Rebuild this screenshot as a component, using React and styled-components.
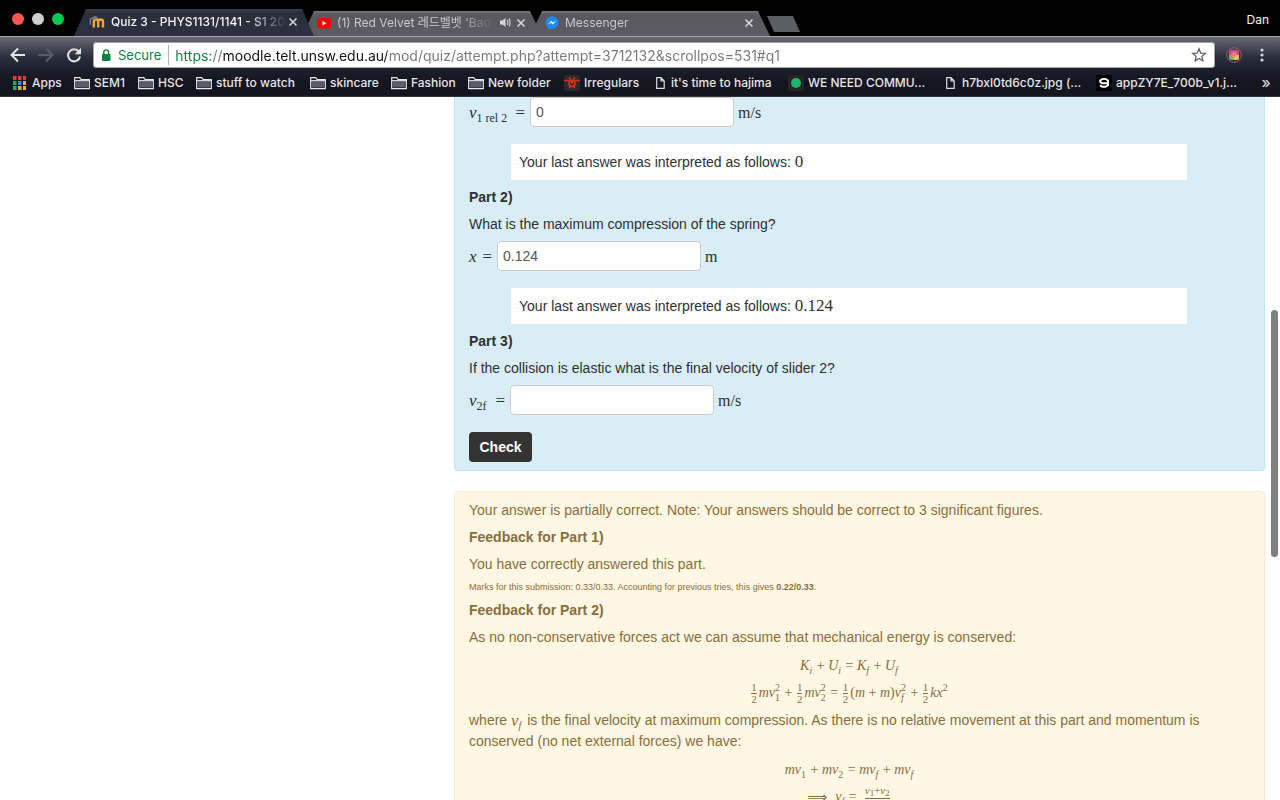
import React from "react";
import styled, { createGlobalStyle } from "styled-components";

const GlobalStyle = createGlobalStyle`
  * { box-sizing: border-box; }
  body { margin: 0; background: #fff; }
  p { margin: 0; }
`;

const ui = `Inter, Roboto, "Noto Sans CJK KR", sans-serif`;

const Window = styled.div`
  height: 100vh;
  overflow: hidden;
  display: flex;
  flex-direction: column;
  font: 14px/20px "Liberation Sans", Arial, sans-serif;
  color: #333;
`;

/* ---------- browser frame ---------- */
const TabStrip = styled.header`
  height: 36px;
  flex: none;
  display: flex;
  align-items: flex-end;
  background: #020203;
  font: 12px/18px ${ui};
`;
const Lights = styled.div`
  display: flex;
  gap: 8px;
  padding: 0 0 11px 12px;
  width: 74px;
  flex: none;
`;
const Light = styled.button`
  width: 12px;
  height: 12px;
  padding: 0;
  border: 0;
  border-radius: 50%;
  background: ${(p) => p.$color};
`;
const Tab = styled.div`
  position: relative;
  z-index: ${(p) => (p.$active ? 2 : 1)};
  width: 240px;
  height: ${(p) => (p.$active ? 27 : 25)}px;
  margin-right: -12px;
  padding: 0 15px 2px;
  display: flex;
  align-items: center;
  color: ${(p) => (p.$active ? "#f4f4f6" : "#c9c9cc")};
  font-weight: ${(p) => (p.$active ? 500 : 400)};
  background: ${(p) =>
    p.$active
      ? "linear-gradient(#3c404c, #2a2e3b 4px, #2d313f)"
      : "linear-gradient(#7b7b80, #58585e 3px, #5c5c62)"};
  clip-path: polygon(12px 0, calc(100% - 12px) 0, 100% 100%, 0 100%);
`;
const TabTitle = styled.span`
  flex: 1;
  min-width: 0;
  margin-left: 6px;
  overflow: hidden;
  white-space: nowrap;
  mask-image: linear-gradient(to right, #000 calc(100% - 40px), transparent);
`;
const IconButton = styled.button`
  display: flex;
  align-items: center;
  justify-content: center;
  flex: none;
  width: ${(p) => p.$w || 12}px;
  height: 20px;
  padding: 0;
  border: 0;
  background: none;
  color: #d5d6d9;
`;
const MoreButton = styled(IconButton)`
  margin-left: auto;
  font: 500 15px/18px ${ui};
`;
const NewTab = styled.button`
  width: 33px;
  height: 16px;
  margin: 0 0 4px 9px;
  border: 0;
  background: #5d5d64;
  clip-path: polygon(0 0, 26px 0, 100% 100%, 7px 100%);
`;
const Profile = styled.button`
  margin: 0 11px 7px auto;
  padding: 0;
  border: 0;
  background: none;
  color: #f2f2f2;
  font: 12px/18px ${ui};
`;

const Toolbar = styled.div`
  height: 34px;
  flex: none;
  display: flex;
  align-items: center;
  padding: 3px 9px 0;
  border-top: 1px solid #a5a6ab;
  background: linear-gradient(#696b74, #2b2f3c 20px, #1b1f2b);
`;
const NavButtons = styled.div`
  display: flex;
  gap: 10px;
  width: 84px;
  flex: none;
`;
const AddressBar = styled.div`
  flex: 1;
  min-width: 0;
  height: 26px;
  display: flex;
  align-items: center;
  padding: 0 7px;
  background: #fff;
  border: 1px solid #a3a5aa;
  border-radius: 3px;
  font: 13px/20px ${ui};
`;
const Secure = styled.span`
  margin: 0 6px 0 7px;
  padding-right: 7px;
  border-right: 1px solid #b5b5b5;
  color: #0b8043;
`;
const Url = styled.input`
  flex: 1;
  min-width: 0;
  height: 22px;
  padding: 0;
  border: 0;
  outline: 0;
  font: 14px/20px ${ui};
  color: transparent;
  background: linear-gradient(to right, #0b8043 36px, #777 36px 48px, #111 48px 212px, #777 212px);
  background-clip: text;
`;
const Bookmarks = styled.nav`
  height: 27px;
  flex: none;
  display: flex;
  align-items: center;
  padding: 0 4px 0 12px;
  background: linear-gradient(#1b1f2b, #14151f 12px);
  border-bottom: 1px solid #34363f;
`;
const Bookmark = styled.a`
  display: flex;
  align-items: center;
  gap: ${(p) => p.$gap || 4}px;
  flex: none;
  width: ${(p) => p.$w}px;
  color: #e6e6e9;
  font: 500 12px/18px ${ui};
  text-decoration: none;
  white-space: nowrap;
`;

/* ---------- page ---------- */
const Page = styled.main`
  position: relative;
  flex: 1;
  min-height: 0;
  overflow: hidden;
  padding: 0 15px 0 454px;
  background: #fff;
`;
const Scroll = styled.div`
  position: absolute;
  right: 2px;
  top: 213px;
  width: 7px;
  height: 247px;
  border-radius: 4px;
  background: #7f7f7f;
`;
const Panel = styled.section`
  display: flex;
  flex-direction: column;
  gap: 7px;
  padding: 8px 14px;
  border: 1px solid;
`;
const Question = styled(Panel)`
  padding-top: 0;
  color: #2f2f2f;
  background: #d9edf6;
  border-color: #bce8f1;
  border-top: 0;
  border-radius: 0 0 4px 4px;
`;
const Feedback = styled(Panel)`
  margin-top: 20px;
  color: #8a6d3b;
  background: #fdf7e4;
  border-color: #faebcc;
  border-radius: 4px;
`;
const Heading = styled.h4`
  margin: 0;
  font: inherit;
  font-weight: 700;
`;
const AnswerRow = styled.div`
  display: flex;
  align-items: center;
  height: 30px;
  margin-bottom: 10px;
  font: 17px/22px "Liberation Serif", serif;
`;
const AnswerLabel = styled.label`
  display: flex;
  justify-content: space-between;
  width: ${(p) => p.$w}px;
  padding: 2px 5px 0 0;
  white-space: nowrap;
`;
const AnswerInput = styled.input`
  width: 204px;
  height: 30px;
  margin-right: 4px;
  padding: 0 5px;
  border: 1px solid #ccc;
  border-radius: 4px;
  background: #fff;
  color: #555;
  font: 14px/20px "Liberation Sans", Arial, sans-serif;
`;
const Unit = styled.span`
  padding-top: 2px;
  font-size: 16px;
`;
const Interpreted = styled.p`
  margin: 0 63px 0 42px;
  padding: 8px;
  background: #fff;
`;
const Num = styled.span`
  font: 17px/20px "Liberation Serif", serif;
`;
const Check = styled.button`
  align-self: flex-start;
  width: 63px;
  height: 30px;
  padding: 0;
  border: 0;
  border-radius: 4px;
  background: #333;
  color: #fff;
  font: 700 14px/20px "Liberation Sans", Arial, sans-serif;
`;
const Marks = styled.p`
  font-size: 9px;
  line-height: 12px;
`;

const Formula = styled.span`
  display: ${(p) => (p.$block ? "flex" : "inline-flex")};
  align-items: center;
  justify-content: center;
  height: 20px;
  font: ${(p) => p.$size || 14}px/20px "Liberation Serif", serif;
  vertical-align: middle;
  white-space: pre;
  padding-right: ${(p) => (p.$block ? 20 : 1)}px;
`;
const Equations = styled.div`
  display: flex;
  flex-direction: column;
  gap: 7px;
  padding-top: 2px;
`;
const Scripts = styled.span`
  display: inline-flex;
  flex-direction: column;
  justify-content: ${(p) => (p.$both ? "space-between" : p.$up ? "flex-start" : "flex-end")};
  height: 20px;
  font-size: 10px;
  line-height: 10px;
  margin-right: 1px;
`;
const FracBox = styled.span`
  display: inline-flex;
  flex-direction: column;
  text-align: center;
  font-size: 11px;
  line-height: 11px;
  margin: 0 2px 0 1px;
`;
const Numer = styled.span`
  border-bottom: 1px solid currentColor;
`;
const Arrow = styled.span`
  font: 14px/20px "DejaVu Sans", sans-serif;
  margin-right: 8px;
`;

const S = ({ sub, sup }) => (
  <Scripts $both={sub && sup} $up={!sub}>
    {sup && <span>{sup}</span>}
    {sub && <span>{sub}</span>}
  </Scripts>
);
const Frac = ({ n, d }) => (
  <FracBox>
    <Numer>{n}</Numer>
    <span>{d}</span>
  </FracBox>
);
const Half = () => <Frac n="1" d="2" />;
const SubText = styled.sub`
  font-size: 12px;
  line-height: 1;
  vertical-align: -4px;
`;
const SmallSub = styled.sub`
  font-size: 9px;
  line-height: 1;
  vertical-align: -2px;
`;

/* ---------- icons ---------- */
const CloseIcon = () => (
  <svg width="10" height="10" viewBox="0 0 10 10" stroke="currentColor" strokeWidth="1.6">
    <path d="M1.500 1.500l7 7M8.500 1.500l-7 7" />
  </svg>
);
const MoodleIcon = () => (
  <svg width="16" height="16" viewBox="0 0 16 16" fill="none">
    <path d="M4.800 13.500V7.500q0-2 2.200-2t2.200 2v6M9.200 13.500V7.500q0-2 2.400-2T14 7.500v6" stroke="#f2a53a" strokeWidth="2.400" />
    <path d="M.5 4.500L6 2l3.500 1.200L5 6z" fill="#77787c" />
    <path d="M1.300 4.500v6" stroke="#9a9a9c" />
  </svg>
);
const YouTubeIcon = () => (
  <svg width="14" height="12" viewBox="0 0 14 12">
    <rect y="1" width="14" height="10.5" rx="2.5" fill="#f00" />
    <path d="M5.5 4l4 2.2-4 2.3z" fill="#fff" />
  </svg>
);
const MessengerIcon = () => (
  <svg width="14" height="14" viewBox="0 0 14 14">
    <path d="M7 .6C3.300.6.6 3.300.6 6.600c0 2 .9 3.700 2.400 4.900v2.300l2.300-1.200c4.500 1.100 8.100-1.900 8.100-6C13.400 3.300 10.700.6 7 .6z" fill="#1c8bff" />
    <path d="M2.800 8.600l3.500-3.800 1.800 1.800 3.200-1.800-3.500 3.800L6 6.800z" fill="#fff" />
  </svg>
);
const SpeakerIcon = () => (
  <svg width="11" height="11" viewBox="0 0 11 11" fill="none" stroke="currentColor">
    <path d="M0 3.500h2.500L5.500 1v9l-3-2.500H0z" fill="currentColor" stroke="none" />
    <path d="M7.300 3q1.200 2.500 0 5M9.200 1.500q1.600 4 0 8" strokeWidth="1.100" />
  </svg>
);
const ArrowIcon = ({ flip }) => (
  <svg width="18" height="16" viewBox="0 0 18 16" fill="none" stroke={flip ? "#5b5e68" : "#e3e4e7"} strokeWidth="2">
    <path d={flip ? "M1 8h14M9 1.500L15.500 8 9 14.500" : "M16 8H3M9 1.500L2.500 8 9 14.500"} />
  </svg>
);
const ReloadIcon = () => (
  <svg width="16" height="16" viewBox="0 0 16 16" fill="none">
    <path d="M12.800 4.600A6 6 0 1 0 14 9.500" stroke="#e3e4e7" strokeWidth="2" />
    <path d="M15 .8v6.400H8.700z" fill="#e3e4e7" />
  </svg>
);
const LockIcon = () => (
  <svg width="10" height="13" viewBox="0 0 10 13" fill="none">
    <rect x="1" y="5" width="8.500" height="7" rx="1" fill="#0b8043" />
    <path d="M2.800 5V3.300a2.400 2.400 0 0 1 4.800 0V5" stroke="#0b8043" strokeWidth="1.400" />
  </svg>
);
const StarIcon = () => (
  <svg width="16" height="16" viewBox="0 0 16 16" fill="none" stroke="#5f6368" strokeWidth="1.300">
    <path d="M8 1.800l1.700 4.300 4.600.3-3.500 3 1.100 4.500L8 11.400l-3.900 2.500 1.100-4.500-3.500-3 4.600-.3z" />
  </svg>
);
const ExtensionIcon = () => (
  <svg width="16" height="16" viewBox="0 0 16 16">
    <circle cx="8" cy="8" r="7.300" fill="none" stroke="#a6596f" strokeWidth="1" />
    <rect x="3" y="3" width="10" height="10" rx="2.500" fill="#dc4a8c" />
    <path d="M3 8h5v5H5.500A2.500 2.500 0 0 1 3 10.500z" fill="#67b56d" />
    <path d="M8 8h5v2.500a2.500 2.500 0 0 1-2.500 2.500H8z" fill="#f3c04d" />
    <circle cx="8" cy="8" r="2.200" fill="#ee7565" stroke="#f4a08c" strokeWidth=".8" />
  </svg>
);
const DotsIcon = () => (
  <svg width="4" height="14" viewBox="0 0 4 14" fill="#d6d7da">
    <circle cx="2" cy="2" r="1.600" /><circle cx="2" cy="7" r="1.600" /><circle cx="2" cy="12" r="1.600" />
  </svg>
);
const AppsIcon = () => (
  <svg width="14" height="14" viewBox="0 0 14 14">
    {["#e53935", "#e53935", "#e53935", "#2fa35b", "#2a8de0", "#f5a83c", "#2fa35b", "#f5a83c", "#f5a83c"].map((c, i) => (
      <rect key={i} x={1 + (i % 3) * 5} y={Math.floor(i / 3) * 5} width="3.500" height="4" fill={c} />
    ))}
  </svg>
);
const FolderIcon = () => (
  <svg width="16" height="14" viewBox="0 0 16 14" fill="none" stroke="#e8e8eb" strokeWidth="1.200">
    <path d="M.7 12.600V1.600h5l1.600 2h8v9z" />
    <path d="M2 5.500h12v6H2z" fill="#5b5d66" stroke="none" />
    <path d="M.7 4.700h14.600" />
  </svg>
);
const FileIcon = () => (
  <svg width="9" height="12" viewBox="0 0 9 12" fill="none" stroke="#dcdce0" strokeWidth="1.200">
    <path d="M.7.7H5L8.200 4v7.300H.7zM5 .7V4h3.200" />
  </svg>
);
const IrregularsIcon = () => (
  <svg width="16" height="16" viewBox="0 0 16 16" fill="none">
    <rect width="16" height="16" rx="3" fill="#2d2a2c" />
    <circle cx="8" cy="8.500" r="3" stroke="#d3321d" strokeWidth="1.800" />
    <path d="M0 5.500h5l3 1.500 3-1.500h5M5 2.500l2 2M11 2.500l-2 2M5 13l2-2M11 13l-2-2M7 8h2" stroke="#d3321d" strokeWidth="1.500" />
  </svg>
);
const GreenIcon = () => (
  <svg width="16" height="16" viewBox="0 0 16 16">
    <rect width="16" height="16" rx="2" fill="#282523" />
    <circle cx="8" cy="8" r="5" fill="#21b573" />
  </svg>
);
const NineIcon = () => (
  <svg width="16" height="16" viewBox="0 0 16 16" fill="none">
    <rect width="16" height="16" rx="1" fill="#000" />
    <path d="M12 8.300H6L4.300 7V5.500L6.500 4h3L12 5.500v4.700l-2.500 1.600h-3L4 10.500" stroke="#fff" strokeWidth="2" />
  </svg>
);

const bookmarks = [
  ["Apps", AppsIcon, 62, 6],
  ["SEM1", FolderIcon, 64],
  ["HSC", FolderIcon, 58],
  ["stuff to watch", FolderIcon, 114],
  ["skincare", FolderIcon, 81],
  ["Fashion", FolderIcon, 77],
  ["New folder", FolderIcon, 96],
  ["Irregulars", IrregularsIcon, 92],
  ["it's time to hajima", FileIcon, 132, 6],
  ["WE NEED COMMU...", GreenIcon, 158],
  ["h7bxl0td6c0z.jpg (...", FileIcon, 150, 7],
  ["appZY7E_700b_v1.j...", NineIcon, 150],
];

const AnswerField = ({ id, label, labelWidth, value, unit }) => (
  <AnswerRow>
    <AnswerLabel htmlFor={id} $w={labelWidth}>
      <span>{label}</span>
      <span>=</span>
    </AnswerLabel>
    <AnswerInput id={id} defaultValue={value} />
    <Unit>{unit}</Unit>
  </AnswerRow>
);

export default function App() {
  return (
    <Window>
      <GlobalStyle />
      <TabStrip>
        <Lights>
          <Light $color="#fc5753" aria-label="Close window" />
          <Light $color="#cfcfcf" aria-label="Minimise window" />
          <Light $color="#00ca56" aria-label="Zoom window" />
        </Lights>
        <Tab $active>
          <MoodleIcon />
          <TabTitle>Quiz 3 - PHYS1131/1141 - S1 2017</TabTitle>
          <IconButton aria-label="Close tab"><CloseIcon /></IconButton>
        </Tab>
        <Tab>
          <YouTubeIcon />
          <TabTitle>(1) Red Velvet 레드벨벳 'Bad Boy'</TabTitle>
          <IconButton $w={20} aria-label="Mute tab"><SpeakerIcon /></IconButton>
          <IconButton aria-label="Close tab"><CloseIcon /></IconButton>
        </Tab>
        <Tab>
          <MessengerIcon />
          <TabTitle>Messenger</TabTitle>
          <IconButton aria-label="Close tab"><CloseIcon /></IconButton>
        </Tab>
        <NewTab aria-label="New tab" />
        <Profile>Dan</Profile>
      </TabStrip>
      <Toolbar>
        <NavButtons>
          <IconButton $w={18} aria-label="Back"><ArrowIcon /></IconButton>
          <IconButton $w={18} aria-label="Forward"><ArrowIcon flip /></IconButton>
          <IconButton $w={18} aria-label="Reload"><ReloadIcon /></IconButton>
        </NavButtons>
        <AddressBar>
          <LockIcon />
          <Secure>Secure</Secure>
          <Url
            aria-label="Address"
            defaultValue="https://moodle.telt.unsw.edu.au/mod/quiz/attempt.php?attempt=3712132&scrollpos=531#q1"
          />
          <IconButton $w={16} aria-label="Bookmark this page"><StarIcon /></IconButton>
        </AddressBar>
        <IconButton $w={38} aria-label="Extension"><ExtensionIcon /></IconButton>
        <IconButton $w={18} aria-label="Menu"><DotsIcon /></IconButton>
      </Toolbar>
      <Bookmarks>
        {bookmarks.map(([name, Icon, w, gap]) => (
          <Bookmark key={name} href="#" $w={w} $gap={gap}>
            <Icon />
            {name}
          </Bookmark>
        ))}
        <MoreButton $w={20} aria-label="More bookmarks">»</MoreButton>
      </Bookmarks>
      <Page>
        <Question>
          <AnswerField id="p1" labelWidth={61} value="0" unit="m/s" label={<><i>v</i><SubText>1 rel 2</SubText></>} />
          <Interpreted>Your last answer was interpreted as follows: <Num>0</Num></Interpreted>
          <Heading>Part 2)</Heading>
          <p>What is the maximum compression of the spring?</p>
          <AnswerField id="p2" labelWidth={28} value="0.124" unit="m" label={<i>x</i>} />
          <Interpreted>Your last answer was interpreted as follows: <Num>0.124</Num></Interpreted>
          <Heading>Part 3)</Heading>
          <p>If the collision is elastic what is the final velocity of slider 2?</p>
          <AnswerField id="p3" labelWidth={41} value="" unit="m/s" label={<><i>v</i><SubText>2f</SubText></>} />
          <Check>Check</Check>
        </Question>
        <Feedback>
          <p>Your answer is partially correct. Note: Your answers should be correct to 3 significant figures.</p>
          <Heading>Feedback for Part 1)</Heading>
          <p>You have correctly answered this part.</p>
          <Marks>Marks for this submission: 0.33/0.33. Accounting for previous tries, this gives <b>0.22/0.33</b>.</Marks>
          <Heading>Feedback for Part 2)</Heading>
          <p>As no non-conservative forces act we can assume that mechanical energy is conserved:</p>
          <Equations>
            <Formula $block>
              <i>K</i><S sub={<i>i</i>} />{" + "}<i>U</i><S sub={<i>i</i>} />{" = "}<i>K</i><S sub={<i>f</i>} />{" + "}<i>U</i><S sub={<i>f</i>} />
            </Formula>
            <Formula $block>
              <Half /><i>mv</i><S sup="2" sub="1" />{" + "}<Half /><i>mv</i><S sup="2" sub="2" />{" = "}
              <Half />(<i>m</i>{" + "}<i>m</i>)<i>v</i><S sup="2" sub={<i>f</i>} />{" + "}<Half /><i>kx</i><S sup="2" />
            </Formula>
          </Equations>
          <p>
            where <Formula $size={17}><i>v</i><S sub={<i>f</i>} /></Formula> is the final velocity at maximum compression. As there is no relative movement at this part and momentum is conserved (no net external forces) we have:
          </p>
          <Equations>
            <Formula $block>
              <i>mv</i><S sub="1" />{" + "}<i>mv</i><S sub="2" />{" = "}<i>mv</i><S sub={<i>f</i>} />{" + "}<i>mv</i><S sub={<i>f</i>} />
            </Formula>
            <Formula $block>
              <Arrow>⟹</Arrow><i>v</i><S sub={<i>f</i>} />{" =  "}
              <Frac n={<><i>v</i><SmallSub>1</SmallSub>+<i>v</i><SmallSub>2</SmallSub></>} d="2" />
            </Formula>
          </Equations>
        </Feedback>
        <Scroll />
      </Page>
    </Window>
  );
}
